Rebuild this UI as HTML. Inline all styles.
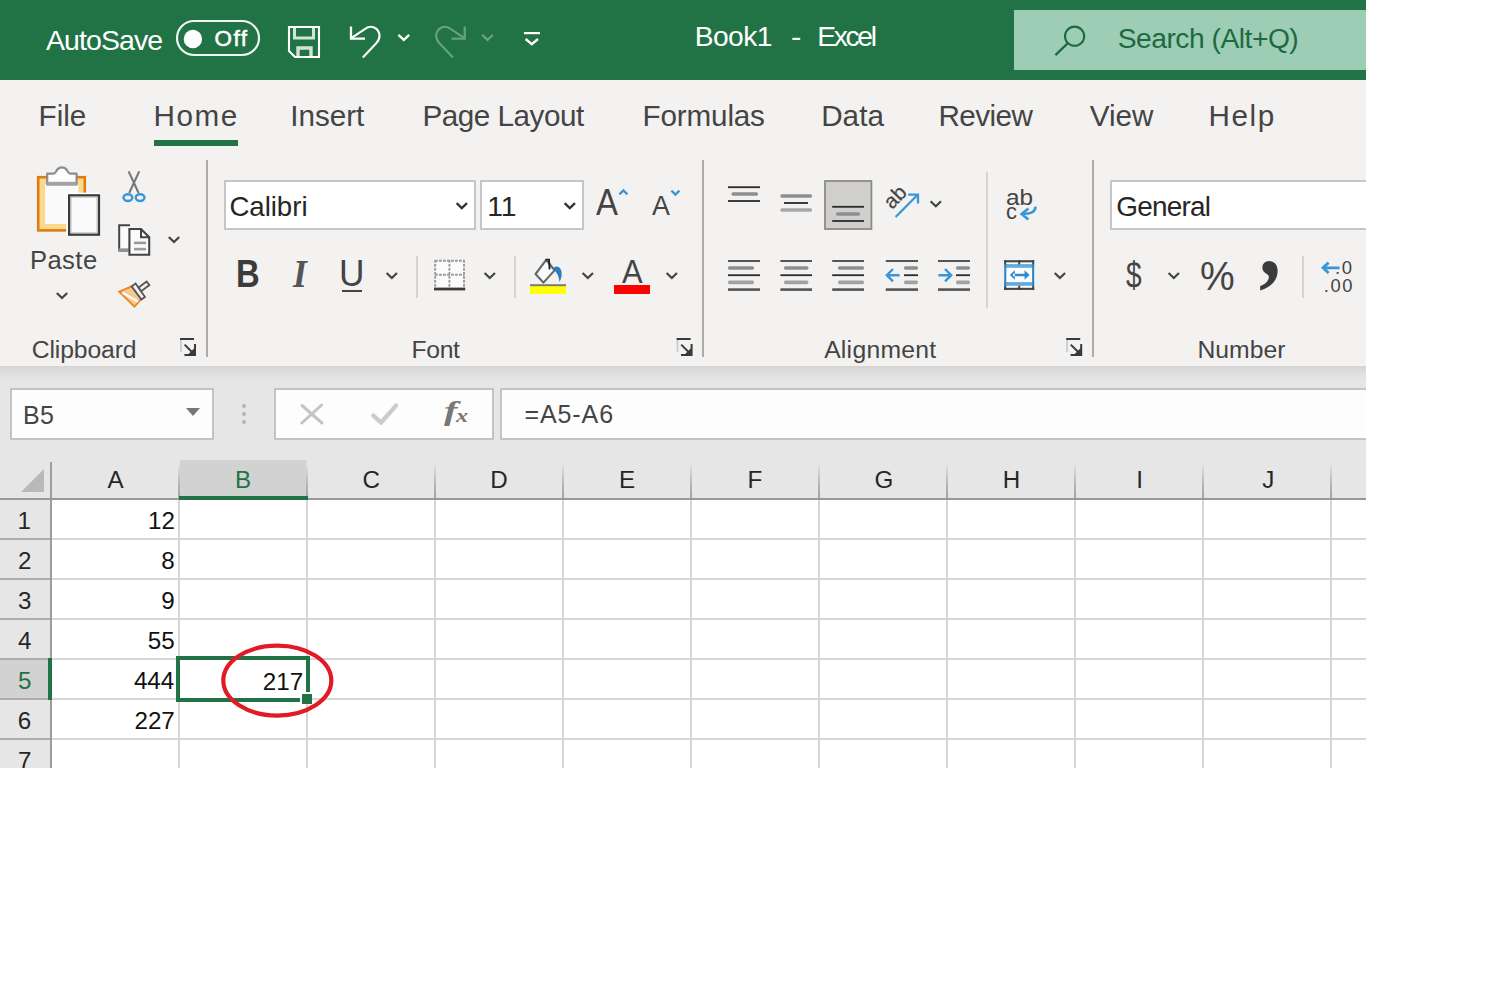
<!DOCTYPE html>
<html lang="en"><head><meta charset="utf-8"><title>Book1 - Excel</title>
<style>
html,body{margin:0;padding:0;background:#fff;}
body{width:1500px;height:1000px;overflow:hidden;font-family:"Liberation Sans",sans-serif;}
#app{position:absolute;left:0;top:0;width:1366px;height:768px;overflow:hidden;background:#fff;}
.t,.t2{position:absolute;line-height:0;white-space:pre;transform-origin:0 0;display:block;}
#in{position:absolute;left:0;top:0;width:1400px;height:800px;}
.r{position:absolute;}
svg{position:absolute;overflow:visible;}
</style></head><body><div id="app"><div id="in">
<div class="r" style="left:0px;top:0px;width:1400px;height:80px;background:#217346;"></div>
<div class="r" style="left:1014px;top:10px;width:386px;height:60px;background:#9dcdb4;"></div>
<div class="r" style="left:0px;top:80px;width:1400px;height:286px;background:#f3f2f1;"></div>
<div class="r" style="left:0px;top:366px;width:1400px;height:14px;background:linear-gradient(#d4d4d4,#dedede 45%,#e6e6e6);"></div>
<div class="r" style="left:0px;top:380px;width:1400px;height:80px;background:#e6e6e6;"></div>
<span class="t" style="left:45.93px;top:39.81px;font-size:28.51px;color:#fff;letter-spacing:-0.90px;">AutoSave</span>
<span class="t" style="left:214.54px;top:38.61px;font-size:22.40px;color:#fff;letter-spacing:1.48px;-webkit-text-stroke:0.55px #fff;">Off</span>
<span class="t" style="left:694.67px;top:35.60px;font-size:28.22px;color:#fff;letter-spacing:-0.58px;">Book1</span>
<span class="t" style="left:790.60px;top:36.61px;font-size:27.00px;color:#fff;transform:scaleX(1.1489);">-</span>
<span class="t" style="left:817.27px;top:35.60px;font-size:28.22px;color:#fff;letter-spacing:-2.34px;">Excel</span>
<span class="t" style="left:1117.73px;top:37.60px;font-size:28.22px;color:#1d6a40;letter-spacing:-0.49px;">Search (Alt+Q)</span>
<span class="t" style="left:38.55px;top:115.61px;font-size:29.67px;color:#444;letter-spacing:-0.02px;">File</span>
<span class="t" style="left:153.55px;top:115.61px;font-size:29.67px;color:#444;letter-spacing:1.52px;">Home</span>
<span class="t" style="left:290.26px;top:115.61px;font-size:29.67px;color:#444;letter-spacing:-0.04px;">Insert</span>
<span class="t" style="left:422.55px;top:115.61px;font-size:29.67px;color:#444;letter-spacing:-0.49px;">Page Layout</span>
<span class="t" style="left:642.55px;top:115.61px;font-size:29.67px;color:#444;letter-spacing:-0.17px;">Formulas</span>
<span class="t" style="left:821.15px;top:115.61px;font-size:29.67px;color:#444;letter-spacing:0.05px;">Data</span>
<span class="t" style="left:938.55px;top:115.61px;font-size:29.67px;color:#444;letter-spacing:-0.59px;">Review</span>
<span class="t" style="left:1089.85px;top:115.61px;font-size:29.67px;color:#444;letter-spacing:-0.04px;">View</span>
<span class="t" style="left:1208.55px;top:115.61px;font-size:29.67px;color:#444;letter-spacing:1.55px;">Help</span>
<div class="r" style="left:154px;top:140px;width:84px;height:6px;background:#217346;"></div>
<div class="r" style="left:206px;top:160px;width:2px;height:196.6px;background:#adacab;"></div>
<div class="r" style="left:702px;top:160px;width:2px;height:196.6px;background:#adacab;"></div>
<div class="r" style="left:1092px;top:160px;width:2px;height:196.6px;background:#adacab;"></div>
<div class="r" style="left:416px;top:256px;width:2px;height:42px;background:#d5d4d3;"></div>
<div class="r" style="left:514px;top:256px;width:2px;height:42px;background:#d5d4d3;"></div>
<div class="r" style="left:986px;top:172px;width:2px;height:136px;background:#d5d4d3;"></div>
<div class="r" style="left:1302px;top:256px;width:2px;height:42px;background:#d5d4d3;"></div>
<span class="t" style="left:31.76px;top:349.51px;font-size:24.73px;color:#444;letter-spacing:-0.13px;">Clipboard</span>
<span class="t" style="left:411.46px;top:349.51px;font-size:24.73px;color:#444;letter-spacing:-0.31px;">Font</span>
<span class="t" style="left:824.14px;top:349.51px;font-size:24.73px;color:#444;letter-spacing:0.26px;">Alignment</span>
<span class="t" style="left:1197.46px;top:349.51px;font-size:24.73px;color:#444;">Number</span>
<span class="t" style="left:29.89px;top:260.21px;font-size:25.60px;color:#444;letter-spacing:0.45px;">Paste</span>
<div class="r" style="left:224px;top:180px;width:248px;height:46px;background:#fff;border:2px solid #c6c6c6;"></div>
<div class="r" style="left:480px;top:180px;width:100px;height:46px;background:#fff;border:2px solid #c6c6c6;"></div>
<div class="r" style="left:1110px;top:180px;width:296px;height:46px;background:#fff;border:2px solid #c6c6c6;"></div>
<span class="t" style="left:229.42px;top:206.71px;font-size:27.64px;color:#262626;letter-spacing:-0.03px;">Calibri</span>
<span class="t" style="left:487.28px;top:205.60px;font-size:28.22px;color:#262626;letter-spacing:-0.02px;">11</span>
<span class="t" style="left:1116.30px;top:206.60px;font-size:27.93px;color:#262626;letter-spacing:-0.76px;">General</span>
<span class="t" style="left:235.79px;top:274.21px;font-size:38.11px;color:#3b3b3b;font-weight:700;transform:scaleX(0.8603);">B</span>
<span class="t" style="left:292.76px;top:274.21px;font-size:40.00px;color:#555;font-family:'Liberation Serif',serif;font-weight:700;font-style:italic;transform:scaleX(0.8889);">I</span>
<span class="t" style="left:339.27px;top:273.91px;font-size:36.36px;color:#444;transform:scaleX(0.9692);">U</span>
<div class="r" style="left:342px;top:290px;width:20px;height:2px;background:#444;"></div>
<span class="t" style="left:596.32px;top:203.00px;font-size:36.36px;color:#444;transform:scaleX(0.9049);">A</span>
<span class="t" style="left:651.93px;top:205.01px;font-size:28.36px;color:#444;transform:scaleX(0.9473);">A</span>
<span class="t" style="left:621.92px;top:271.21px;font-size:33.89px;color:#444;transform:scaleX(0.9130);">A</span>
<div class="r" style="left:530px;top:285px;width:36px;height:9px;background:#ffff00;"></div>
<div class="r" style="left:614px;top:285px;width:36px;height:9px;background:#ff0000;"></div>
<span class="t" style="left:1125.52px;top:275.01px;font-size:37.17px;color:#444;transform:scaleX(0.7563);">$</span>
<span class="t" style="left:1199.63px;top:276.60px;font-size:40.29px;color:#444;transform:scaleX(0.9686);">%</span>
<span class="t" style="left:1259.30px;top:242.21px;font-size:98.00px;color:#3b3b3b;font-family:'Liberation Serif',serif;font-weight:700;transform:scaleX(0.8980);">,</span>
<span class="t" style="left:1335.34px;top:267.50px;font-size:18.35px;color:#444;letter-spacing:1.65px;transform:scaleX(1.0076);">.0</span>
<span class="t" style="left:1323.85px;top:285.50px;font-size:18.35px;color:#444;letter-spacing:1.52px;">.00</span>
<span class="t" style="left:1005.57px;top:197.61px;font-size:22.07px;color:#444;transform:scaleX(1.1025);">ab</span>
<span class="t" style="left:1005.67px;top:212.41px;font-size:21.50px;color:#444;transform:scaleX(1.0168);">c</span>
<div class="r" style="left:892.3px;top:209.6px;width:0;height:0;transform:rotate(-46deg);transform-origin:0 0"><span class="t2" style="left:0;top:-7.2px;font-size:20.6px;color:#444;-webkit-text-stroke:0.25px #444">ab</span></div>
<div class="r" style="left:10px;top:388px;width:200px;height:48px;background:#fdfdfd;border:2px solid #c4c4c4;"></div>
<div class="r" style="left:274px;top:388px;width:216px;height:48px;background:#fdfdfd;border:2px solid #c4c4c4;"></div>
<div class="r" style="left:500px;top:388px;width:896px;height:48px;background:#fdfdfd;border:2px solid #c4c4c4;"></div>
<span class="t" style="left:22.94px;top:414.60px;font-size:25.02px;color:#444;letter-spacing:0.48px;">B5</span>
<span class="t" style="left:524.41px;top:414.21px;font-size:25.02px;color:#444;letter-spacing:0.91px;">=A5-A6</span>
<span class="t" style="left:444.20px;top:411.40px;font-size:27.60px;color:#777;font-family:'Liberation Serif',serif;font-weight:700;font-style:italic;transform:scaleX(1.4667);">f</span>
<span class="t" style="left:455.80px;top:416.21px;font-size:19.13px;color:#777;font-family:'Liberation Serif',serif;font-weight:700;font-style:italic;transform:scaleX(1.2653);">x</span>
<div class="r" style="left:242px;top:404px;width:4px;height:4px;background:#b4b4b4;border-radius:2px;"></div>
<div class="r" style="left:242px;top:412px;width:4px;height:4px;background:#b4b4b4;border-radius:2px;"></div>
<div class="r" style="left:242px;top:420px;width:4px;height:4px;background:#b4b4b4;border-radius:2px;"></div>
<div class="r" style="left:0px;top:460px;width:1400px;height:40px;background:#e6e6e6;"></div>
<div class="r" style="left:0px;top:500px;width:52px;height:300px;background:#e6e6e6;"></div>
<div class="r" style="left:180px;top:460px;width:127px;height:38px;background:#d2d2d2;"></div>
<div class="r" style="left:0px;top:660px;width:50px;height:38px;background:#d2d2d2;"></div>
<div class="r" style="left:52px;top:500px;width:1348px;height:300px;background:#fff;"></div>
<div class="r" style="left:178px;top:500px;width:2px;height:300px;background:#d6d6d6;"></div>
<div class="r" style="left:178px;top:462px;width:2px;height:38px;background:linear-gradient(#e6e6e6,#b5b5b5 60%,#a0a0a0);"></div>
<div class="r" style="left:306px;top:500px;width:2px;height:300px;background:#d6d6d6;"></div>
<div class="r" style="left:306px;top:462px;width:2px;height:38px;background:linear-gradient(#e6e6e6,#b5b5b5 60%,#a0a0a0);"></div>
<div class="r" style="left:434px;top:500px;width:2px;height:300px;background:#d6d6d6;"></div>
<div class="r" style="left:434px;top:462px;width:2px;height:38px;background:linear-gradient(#e6e6e6,#b5b5b5 60%,#a0a0a0);"></div>
<div class="r" style="left:562px;top:500px;width:2px;height:300px;background:#d6d6d6;"></div>
<div class="r" style="left:562px;top:462px;width:2px;height:38px;background:linear-gradient(#e6e6e6,#b5b5b5 60%,#a0a0a0);"></div>
<div class="r" style="left:690px;top:500px;width:2px;height:300px;background:#d6d6d6;"></div>
<div class="r" style="left:690px;top:462px;width:2px;height:38px;background:linear-gradient(#e6e6e6,#b5b5b5 60%,#a0a0a0);"></div>
<div class="r" style="left:818px;top:500px;width:2px;height:300px;background:#d6d6d6;"></div>
<div class="r" style="left:818px;top:462px;width:2px;height:38px;background:linear-gradient(#e6e6e6,#b5b5b5 60%,#a0a0a0);"></div>
<div class="r" style="left:946px;top:500px;width:2px;height:300px;background:#d6d6d6;"></div>
<div class="r" style="left:946px;top:462px;width:2px;height:38px;background:linear-gradient(#e6e6e6,#b5b5b5 60%,#a0a0a0);"></div>
<div class="r" style="left:1074px;top:500px;width:2px;height:300px;background:#d6d6d6;"></div>
<div class="r" style="left:1074px;top:462px;width:2px;height:38px;background:linear-gradient(#e6e6e6,#b5b5b5 60%,#a0a0a0);"></div>
<div class="r" style="left:1202px;top:500px;width:2px;height:300px;background:#d6d6d6;"></div>
<div class="r" style="left:1202px;top:462px;width:2px;height:38px;background:linear-gradient(#e6e6e6,#b5b5b5 60%,#a0a0a0);"></div>
<div class="r" style="left:1330px;top:500px;width:2px;height:300px;background:#d6d6d6;"></div>
<div class="r" style="left:1330px;top:462px;width:2px;height:38px;background:linear-gradient(#e6e6e6,#b5b5b5 60%,#a0a0a0);"></div>
<div class="r" style="left:52px;top:538px;width:1348px;height:2px;background:#d6d6d6;"></div>
<div class="r" style="left:0px;top:538px;width:52px;height:2px;background:#adadad;"></div>
<div class="r" style="left:52px;top:578px;width:1348px;height:2px;background:#d6d6d6;"></div>
<div class="r" style="left:0px;top:578px;width:52px;height:2px;background:#adadad;"></div>
<div class="r" style="left:52px;top:618px;width:1348px;height:2px;background:#d6d6d6;"></div>
<div class="r" style="left:0px;top:618px;width:52px;height:2px;background:#adadad;"></div>
<div class="r" style="left:52px;top:658px;width:1348px;height:2px;background:#d6d6d6;"></div>
<div class="r" style="left:0px;top:658px;width:52px;height:2px;background:#adadad;"></div>
<div class="r" style="left:52px;top:698px;width:1348px;height:2px;background:#d6d6d6;"></div>
<div class="r" style="left:0px;top:698px;width:52px;height:2px;background:#adadad;"></div>
<div class="r" style="left:52px;top:738px;width:1348px;height:2px;background:#d6d6d6;"></div>
<div class="r" style="left:0px;top:738px;width:52px;height:2px;background:#adadad;"></div>
<div class="r" style="left:50px;top:462px;width:2px;height:338px;background:#9d9d9d;"></div>
<div class="r" style="left:0px;top:498px;width:1400px;height:2px;background:#999;"></div>
<div class="r" style="left:179px;top:496px;width:129px;height:4px;background:#217346;"></div>
<div class="r" style="left:48px;top:658px;width:4px;height:42px;background:#217346;"></div>
<span class="t" style="left:107.42px;top:479.60px;font-size:24.20px;color:#262626;">A</span>
<span class="t" style="left:235.06px;top:479.61px;font-size:24.20px;color:#217346;">B</span>
<span class="t" style="left:362.61px;top:479.61px;font-size:24.20px;color:#262626;">C</span>
<span class="t" style="left:490.33px;top:479.61px;font-size:24.20px;color:#262626;">D</span>
<span class="t" style="left:618.94px;top:479.61px;font-size:24.20px;color:#262626;">E</span>
<span class="t" style="left:747.60px;top:479.61px;font-size:24.20px;color:#262626;">F</span>
<span class="t" style="left:874.39px;top:479.61px;font-size:24.20px;color:#262626;">G</span>
<span class="t" style="left:1002.76px;top:479.61px;font-size:24.20px;color:#262626;">H</span>
<span class="t" style="left:1136.14px;top:479.61px;font-size:24.20px;color:#262626;">I</span>
<span class="t" style="left:1262.18px;top:479.61px;font-size:24.20px;color:#262626;">J</span>
<span class="t" style="left:17.55px;top:521.41px;font-size:24.20px;color:#262626;">1</span>
<span class="t" style="left:17.88px;top:561.41px;font-size:24.20px;color:#262626;">2</span>
<span class="t" style="left:17.95px;top:601.41px;font-size:24.20px;color:#262626;">3</span>
<span class="t" style="left:17.95px;top:641.41px;font-size:24.20px;color:#262626;">4</span>
<span class="t" style="left:17.88px;top:681.41px;font-size:24.20px;color:#217346;">5</span>
<span class="t" style="left:17.79px;top:721.41px;font-size:24.20px;color:#262626;">6</span>
<span class="t" style="left:17.88px;top:761.41px;font-size:24.20px;color:#262626;">7</span>
<span class="t" style="left:147.95px;top:521.41px;font-size:24.20px;color:#111;">12</span>
<span class="t" style="left:161.20px;top:561.40px;font-size:24.20px;color:#111;">8</span>
<span class="t" style="left:161.26px;top:601.40px;font-size:24.20px;color:#111;">9</span>
<span class="t" style="left:147.71px;top:641.40px;font-size:24.20px;color:#111;">55</span>
<span class="t" style="left:133.91px;top:681.40px;font-size:24.20px;color:#111;">444</span>
<span class="t" style="left:134.46px;top:721.40px;font-size:24.20px;color:#111;">227</span>
<span class="t" style="left:262.86px;top:681.81px;font-size:24.20px;color:#111;">217</span>
<div class="r" style="left:176px;top:656px;width:126px;height:38px;background:transparent;border:4px solid #217346;"></div>
<div class="r" style="left:300px;top:692px;width:12px;height:12px;background:#fff;"></div>
<div class="r" style="left:302px;top:694px;width:10px;height:10px;background:#217346;"></div>
<svg style="left:215px;top:638px" width="126" height="86" viewBox="215 638 126 86"><ellipse cx="277.3" cy="680.6" rx="54" ry="35" fill="none" stroke="#e11b26" stroke-width="4.2"/></svg>
<svg style="left:0;top:0" width="1366" height="768" viewBox="0 0 1366 768"><rect x="177" y="21" width="82" height="34" rx="17" fill="none" stroke="#eef6f1" stroke-width="2.2"/>
<circle cx="192.9" cy="39" r="9.2" fill="#fff"/>
<path d="M289 27 H319 V57 H295 L289 51 Z" fill="none" stroke="#fff" stroke-width="2.1"/>
<path d="M294.5 28 V38 H313.5 V28" fill="none" stroke="#cfe5d8" stroke-width="3"/>
<path d="M298 56 V48 H311 V56" fill="none" stroke="#cfe5d8" stroke-width="3.4"/>
<path d="M351 26.5 V38.6 H365" fill="none" stroke="#fff" stroke-width="2.3"/>
<path d="M352 37.6 L365.5 28.6 C371 24.5 379.5 28 379.5 36 C379.5 39 378 41.5 376 43.5 L362.8 57.5" fill="none" stroke="#fff" stroke-width="2.1"/>
<path d="M398.4 34.9 L403.8 39.9 L409.2 34.9" fill="none" stroke="#fff" stroke-width="2.3" stroke-linecap="butt" stroke-linejoin="miter" opacity="1"/>
<g opacity="0.32"><path d="M464.7 26.5 V38.6 H451.5" fill="none" stroke="#fff" stroke-width="2.3"/><path d="M463.7 37.6 L450.2 28.6 C444.7 24.5 436.2 28 436.2 36 C436.2 39 437.7 41.5 439.7 43.5 L452.9 57.5" fill="none" stroke="#fff" stroke-width="2.1"/></g>
<path d="M482.1 34.9 L487.5 39.9 L492.9 34.9" fill="none" stroke="#fff" stroke-width="2.3" stroke-linecap="butt" stroke-linejoin="miter" opacity="0.32"/>
<rect x="524" y="32" width="16" height="2.2" fill="#fff"/>
<path d="M525.6 39.0 L531.8 44.2 L538.0 39.0" fill="none" stroke="#fff" stroke-width="2.3" stroke-linecap="butt" stroke-linejoin="miter" opacity="1"/>
<circle cx="1074.6" cy="36.2" r="9.6" fill="none" stroke="#1d6a40" stroke-width="2.1"/><path d="M1067.6 43.4 L1055.4 55.2" stroke="#1d6a40" stroke-width="2.3" fill="none"/>
<path d="M56.8 293.0 L62.0 298.0 L67.2 293.0" fill="none" stroke="#444" stroke-width="2.2" stroke-linecap="butt" stroke-linejoin="miter" opacity="1"/>
<path d="M168.8 237.0 L174.0 242.0 L179.2 237.0" fill="none" stroke="#444" stroke-width="2.2" stroke-linecap="butt" stroke-linejoin="miter" opacity="1"/>
<path d="M386.6 273.0 L391.8 278.0 L397.0 273.0" fill="none" stroke="#444" stroke-width="2.2" stroke-linecap="butt" stroke-linejoin="miter" opacity="1"/>
<path d="M484.6 273.0 L489.8 278.0 L495.0 273.0" fill="none" stroke="#444" stroke-width="2.2" stroke-linecap="butt" stroke-linejoin="miter" opacity="1"/>
<path d="M582.6 273.0 L587.8 278.0 L593.0 273.0" fill="none" stroke="#444" stroke-width="2.2" stroke-linecap="butt" stroke-linejoin="miter" opacity="1"/>
<path d="M666.6 273.0 L671.8 278.0 L677.0 273.0" fill="none" stroke="#444" stroke-width="2.2" stroke-linecap="butt" stroke-linejoin="miter" opacity="1"/>
<path d="M930.6 201.2 L935.8 206.2 L941.0 201.2" fill="none" stroke="#444" stroke-width="2.2" stroke-linecap="butt" stroke-linejoin="miter" opacity="1"/>
<path d="M1054.7 273.0 L1059.9 278.0 L1065.1 273.0" fill="none" stroke="#444" stroke-width="2.2" stroke-linecap="butt" stroke-linejoin="miter" opacity="1"/>
<path d="M1168.6 273.0 L1173.8 278.0 L1179.0 273.0" fill="none" stroke="#444" stroke-width="2.2" stroke-linecap="butt" stroke-linejoin="miter" opacity="1"/>
<path d="M456.6 203.1 L461.8 208.1 L467.0 203.1" fill="none" stroke="#333" stroke-width="2.3" stroke-linecap="butt" stroke-linejoin="miter" opacity="1"/>
<path d="M564.6 203.1 L569.8 208.1 L575.0 203.1" fill="none" stroke="#333" stroke-width="2.3" stroke-linecap="butt" stroke-linejoin="miter" opacity="1"/>
<rect x="180" y="338" width="14" height="2" fill="#3a3a3a"/><rect x="180" y="340" width="1.8" height="12" fill="#cbcbcb"/><path d="M184.6 344.6 L195 355" stroke="#3a3a3a" stroke-width="2"/><path d="M194 344 H196 V356 H184.4 V354 H188.5 L194 348.5 Z" fill="#3a3a3a"/>
<rect x="676.6" y="338" width="14" height="2" fill="#3a3a3a"/><rect x="676.6" y="340" width="1.8" height="12" fill="#cbcbcb"/><path d="M681.2 344.6 L691.6 355" stroke="#3a3a3a" stroke-width="2"/><path d="M690.6 344 H692.6 V356 H681.0 V354 H685.1 L690.6 348.5 Z" fill="#3a3a3a"/>
<rect x="1066.2" y="338" width="14" height="2" fill="#3a3a3a"/><rect x="1066.2" y="340" width="1.8" height="12" fill="#cbcbcb"/><path d="M1070.8 344.6 L1081.2 355" stroke="#3a3a3a" stroke-width="2"/><path d="M1080.2 344 H1082.2 V356 H1070.6000000000001 V354 H1074.7 L1080.2 348.5 Z" fill="#3a3a3a"/>
<path d="M186 408 H200 L193 416 Z" fill="#777"/>
<path d="M44 469 V492 H21 Z" fill="#b9b9b9"/>
<path d="M302 405.5 L322 423 M321.6 405 L301.8 423" stroke="#c4c4c4" stroke-width="3" fill="none" stroke-linecap="round"/>
<path d="M373.4 415.6 L381 422.6 L396 405.6" stroke="#cbcbcb" stroke-width="4.4" fill="none" stroke-linejoin="round" stroke-linecap="round"/>
<rect x="38.2" y="177.2" width="46.6" height="53.2" fill="#f9d98c" stroke="#e07c12" stroke-width="2.6"/>
<rect x="45" y="184" width="33.4" height="40" fill="#fafafa"/>
<path d="M47.2 184.4 V173.6 H53.5 C55.5 173.6 56 171 57.5 169.3 C59.8 166.6 64 166.6 66.3 169.3 C67.8 171 68.3 173.6 70.3 173.6 H76.6 V184.4 Z" fill="#fdfdfd" stroke="#8c8c8c" stroke-width="2.2" stroke-linejoin="round"/>
<rect x="47.2" y="181.8" width="29.4" height="3.6" fill="#a3a3a3"/>
<rect x="66.2" y="192.6" width="33" height="42" fill="#fff"/>
<rect x="69.2" y="195.4" width="29.7" height="39.2" fill="#fafafa" stroke="#3a3a3a" stroke-width="2.4"/>
<rect x="71" y="197.2" width="26" height="35.6" fill="none" stroke="#c9c9c9" stroke-width="1.2"/>
<path d="M128.6 171.4 L138.6 193 M139.2 171.4 L129.2 193" stroke="#777" stroke-width="2.1" fill="none"/>
<ellipse cx="127.9" cy="197.6" rx="4.4" ry="3.4" fill="#f3f2f1" stroke="#3a96d6" stroke-width="2.4"/>
<ellipse cx="140.1" cy="197.6" rx="4.4" ry="3.4" fill="#f3f2f1" stroke="#3a96d6" stroke-width="2.4"/>
<path d="M130 225.2 H119.2 V250.6 H128.4" fill="#fafafa" stroke="#444" stroke-width="2"/>
<rect x="118.4" y="248.4" width="10" height="3.2" fill="#8f8f8f"/>
<path d="M129.4 229 H141 L149.2 237.2 V254.7 H129.4 Z" fill="#fafafa" stroke="#444" stroke-width="2.1"/>
<path d="M141 229 V237.2 H149.2" fill="none" stroke="#444" stroke-width="2"/>
<rect x="134" y="241.6" width="12" height="2.6" fill="#9a9a9a"/><rect x="134" y="247.8" width="12" height="2.6" fill="#9a9a9a"/>
<path d="M119.2 291.6 L132.6 286 L141.6 298.6 L134.4 306.6 Z" fill="#f7c98d" stroke="#e8892a" stroke-width="2"/>
<path d="M122.5 292.8 L138 301.8" stroke="#fff" stroke-width="2.2"/>
<path d="M131.6 286.4 L135.6 283.6 L145 297 L141.4 299.6 Z" fill="#f3f2f1" stroke="#555" stroke-width="1.8"/>
<path d="M138.6 287.4 L146.6 281.6 L149.4 285 L141.2 291.2 Z" fill="#f3f2f1" stroke="#555" stroke-width="1.8"/>
<rect x="435" y="261" width="29" height="28" fill="#fbfbfb"/>
<path d="M435 260.8 H464.4 M435 274.8 H464.4 M435.2 260 V289 M449.4 260 V289 M464 260 V289" stroke="#9a9a9a" stroke-width="1.9" fill="none" stroke-dasharray="2.8 1.2"/>
<rect x="434" y="287.6" width="31.2" height="2.8" fill="#3a3a3a"/>
<rect x="530" y="284.2" width="36" height="2" fill="#7a7a7a"/>
<path d="M545.8 260.4 L535.6 274 L543.4 282.6 L554.6 270.4 L548 262 Z" fill="#fbfbfb" stroke="#666" stroke-width="2.1" stroke-linejoin="round"/>
<path d="M545.4 259.6 H549 L549.6 269.4" fill="none" stroke="#222" stroke-width="1.9"/>
<path d="M552.8 269 C554.4 265.6 559 265.4 560.8 269.4 C562.6 273.4 561.4 278.6 559.4 282 C559.2 279 558.6 276.4 557.2 274 C556 272 554.6 270.2 552.8 269 Z" fill="#2b7cc2"/>
<path d="M619.4 194.4 L623.4 190.4 L627.4 194.4" fill="none" stroke="#3a96d6" stroke-width="2.3"/>
<path d="M671.4 190.6 L675.4 194.6 L679.4 190.6" fill="none" stroke="#3a96d6" stroke-width="2.3"/>
<rect x="728" y="186.30" width="32.00" height="1.8" fill="#2b2b2b"/>
<rect x="731.5" y="192.20" width="26.50" height="3.6" rx="1.6" fill="#8e8e8e"/>
<rect x="728" y="200.10" width="32.00" height="1.8" fill="#2b2b2b"/>
<rect x="780.4" y="194.20" width="31.60" height="3.6" rx="1.6" fill="#8e8e8e"/>
<rect x="784" y="202.10" width="24.00" height="1.8" fill="#2b2b2b"/>
<rect x="780.4" y="208.20" width="31.60" height="3.6" rx="1.6" fill="#a6a6a6"/>
<rect x="825" y="181" width="46.4" height="48" fill="#d0cfce" stroke="#8a8a8a" stroke-width="1.8"/>
<rect x="832.2" y="205.90" width="31.80" height="1.8" fill="#2b2b2b"/>
<rect x="836" y="212.20" width="24.00" height="3.6" rx="1.6" fill="#8e8e8e"/>
<rect x="832.2" y="220.10" width="31.80" height="1.8" fill="#2b2b2b"/>
<rect x="728" y="260.10" width="32.00" height="1.8" fill="#444"/>
<rect x="728" y="266.20" width="26.00" height="3.6" rx="1.6" fill="#8e8e8e"/>
<rect x="728" y="274.30" width="32.00" height="1.8" fill="#2b2b2b"/>
<rect x="728" y="280.60" width="26.00" height="3.6" rx="1.6" fill="#a2a2a2"/>
<rect x="728" y="288.30" width="32.00" height="2.6" fill="#555"/>
<rect x="780.4" y="260.10" width="31.60" height="1.8" fill="#444"/>
<rect x="784" y="266.20" width="24.40" height="3.6" rx="1.6" fill="#8e8e8e"/>
<rect x="780.4" y="274.30" width="31.60" height="1.8" fill="#2b2b2b"/>
<rect x="784" y="280.60" width="24.40" height="3.6" rx="1.6" fill="#a2a2a2"/>
<rect x="780.4" y="288.30" width="31.60" height="2.6" fill="#555"/>
<rect x="832.2" y="260.10" width="31.80" height="1.8" fill="#444"/>
<rect x="838" y="266.20" width="26.00" height="3.6" rx="1.6" fill="#8e8e8e"/>
<rect x="832.2" y="274.30" width="31.80" height="1.8" fill="#2b2b2b"/>
<rect x="838" y="280.60" width="26.00" height="3.6" rx="1.6" fill="#a2a2a2"/>
<rect x="832.2" y="288.30" width="31.80" height="2.6" fill="#555"/>
<rect x="885.8" y="260.10" width="32.20" height="1.8" fill="#444"/>
<rect x="904" y="266.20" width="14.00" height="3.6" rx="1.6" fill="#8e8e8e"/>
<rect x="904" y="274.30" width="14.00" height="1.8" fill="#2b2b2b"/>
<rect x="904" y="280.60" width="14.00" height="3.6" rx="1.6" fill="#a2a2a2"/>
<rect x="885.8" y="288.30" width="32.20" height="2.6" fill="#555"/>
<rect x="938" y="260.10" width="32.00" height="1.8" fill="#444"/>
<rect x="956" y="266.20" width="14.00" height="3.6" rx="1.6" fill="#8e8e8e"/>
<rect x="956" y="274.30" width="14.00" height="1.8" fill="#2b2b2b"/>
<rect x="956" y="280.60" width="14.00" height="3.6" rx="1.6" fill="#a2a2a2"/>
<rect x="938" y="288.30" width="32.00" height="2.6" fill="#555"/>
<path d="M899.6 275.2 H887.4 M893 269 L886.8 275.2 L893 281.4" fill="none" stroke="#3a96d6" stroke-width="2.4"/>
<path d="M938.4 275.2 H950.6 M945 269 L951.2 275.2 L945 281.4" fill="none" stroke="#3a96d6" stroke-width="2.4"/>
<path d="M895.6 217 L917.2 195.2 M908.2 194.6 H918 V203.6" fill="none" stroke="#3a96d6" stroke-width="2.3"/>
<path d="M1035.4 206.6 C1035.6 211.6 1031.6 214 1022.4 214 M1028.4 208.6 L1021.6 214 L1028.4 219.4" fill="none" stroke="#3a96d6" stroke-width="2.6"/>
<rect x="1004.2" y="261" width="30" height="28" fill="#fdfdfd"/>
<rect x="1004.2" y="264.1" width="30" height="3.7" fill="#5eabdf"/><rect x="1004.2" y="282.1" width="30" height="3.7" fill="#5eabdf"/>
<rect x="1004.2" y="264" width="2.1" height="22" fill="#2e86c9"/><rect x="1032.1" y="264" width="2.1" height="22" fill="#2e86c9"/>
<rect x="1004.2" y="260.2" width="30" height="2.1" fill="#444"/><rect x="1004.2" y="287.8" width="30" height="2.1" fill="#444"/>
<rect x="1018.2" y="260.2" width="2" height="4.2" fill="#444"/><rect x="1018.2" y="285.8" width="2" height="4.2" fill="#444"/>
<rect x="1004.2" y="260.2" width="2" height="4" fill="#444"/><rect x="1032.2" y="260.2" width="2" height="4" fill="#444"/><rect x="1004.2" y="286" width="2" height="4" fill="#444"/><rect x="1032.2" y="286" width="2" height="4" fill="#444"/>
<path d="M1013 273.7 H1026.4 V276.2 H1013 Z M1014.8 270.2 L1009.8 274.95 L1014.8 279.7 Z M1024.6 270.2 L1029.6 274.95 L1024.6 279.7 Z" fill="#2e8ad0"/>
<path d="M1339.6 267.8 H1324 M1328.6 262.6 L1323 267.8 L1328.6 273" fill="none" stroke="#3a96d6" stroke-width="2.8"/></svg>
</div></div></body></html>
